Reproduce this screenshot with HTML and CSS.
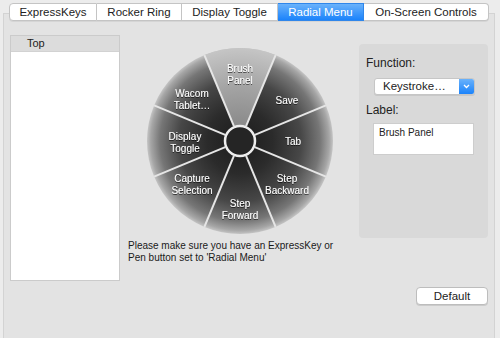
FILE: index.html
```html
<!DOCTYPE html>
<html>
<head>
    <meta charset="utf-8">
    <title>Radial Menu</title>
    <link rel="stylesheet" href="styles.css">
</head>
<body>
    <div class="tabs">
        <div class="tab first w-keys">ExpressKeys</div>
        <div class="tab w-ring">Rocker Ring</div>
        <div class="tab w-toggle">Display Toggle</div>
        <div class="tab active w-radial">Radial Menu</div>
        <div class="tab last w-osc">On-Screen Controls</div>
    </div>

    <div class="box">
        <!-- menu tree -->
        <div class="list">
            <div class="list-head">Top</div>
            <div class="list-body"></div>
        </div>

        <!-- wheel preview -->
        <div class="center">
            <svg class="wheel" width="190" height="190" viewBox="-95 -95 190 190">
                <defs>
                    <radialGradient id="wheelFill" cx="0" cy="0" r="94" gradientUnits="userSpaceOnUse">
                        <stop offset="0" stop-color="#1c1c1c"/>
                        <stop offset="0.35" stop-color="#2b2b2b"/>
                        <stop offset="0.65" stop-color="#474747"/>
                        <stop offset="0.85" stop-color="#767676"/>
                        <stop offset="0.95" stop-color="#a6a6a6"/>
                        <stop offset="1" stop-color="#cdcdcd"/>
                    </radialGradient>
                    <radialGradient id="hiFill" cx="0" cy="0" r="94" gradientUnits="userSpaceOnUse">
                        <stop offset="0.2" stop-color="#8c8c8c"/>
                        <stop offset="0.6" stop-color="#a5a5a5"/>
                        <stop offset="1" stop-color="#c6c6c6"/>
                    </radialGradient>
                    <filter id="shadow" x="-20%" y="-20%" width="140%" height="140%">
                        <feDropShadow dx="0" dy="0.8" stdDeviation="0.6" flood-color="#000" flood-opacity="0.8"/>
                    </filter>
                </defs>
                <circle r="93" fill="url(#wheelFill)"/>
                <path d="M0,0 L-35.6,-85.9 A93,93 0 0,1 35.6,-85.9 Z" fill="url(#hiFill)"/>
                <g stroke="#e6e6e6" stroke-width="2">
                    <line x1="-6.1" y1="-14.8" x2="-35.6" y2="-85.9"/>
                    <line x1="6.1" y1="-14.8" x2="35.6" y2="-85.9"/>
                    <line x1="14.8" y1="-6.1" x2="85.9" y2="-35.6"/>
                    <line x1="14.8" y1="6.1" x2="85.9" y2="35.6"/>
                    <line x1="6.1" y1="14.8" x2="35.6" y2="85.9"/>
                    <line x1="-6.1" y1="14.8" x2="-35.6" y2="85.9"/>
                    <line x1="-14.8" y1="6.1" x2="-85.9" y2="35.6"/>
                    <line x1="-14.8" y1="-6.1" x2="-85.9" y2="-35.6"/>
                </g>
                <circle r="15" fill="#252525" stroke="#eeeeee" stroke-width="2.5"/>
                <g class="labels" filter="url(#shadow)">
                    <text x="0" y="-69">Brush</text>
                    <text x="0" y="-57">Panel</text>
                    <text x="47" y="-37.5">Save</text>
                    <text x="53" y="3.5">Tab</text>
                    <text x="47" y="40.5">Step</text>
                    <text x="47" y="52.5">Backward</text>
                    <text x="0" y="65.5">Step</text>
                    <text x="0" y="77.5">Forward</text>
                    <text x="-48" y="40.5">Capture</text>
                    <text x="-48" y="52.5">Selection</text>
                    <text x="-55" y="-1">Display</text>
                    <text x="-55" y="10.5">Toggle</text>
                    <text x="-48" y="-44">Wacom</text>
                    <text x="-48" y="-32">Tablet…</text>
                </g>
            </svg>
            <p class="note">Please make sure you have an ExpressKey or<br>Pen button set to 'Radial Menu'</p>
        </div>

        <!-- settings for selected item -->
        <div class="side">
            <div class="panel">
                <div class="field-label">Function:</div>
                <div class="select">
                    <span class="select-text">Keystroke…</span>
                    <span class="select-arrow">
                        <svg width="7" height="5" viewBox="0 0 7 5"><path d="M1 1 L3.5 3.5 L6 1" fill="none" stroke="#fff" stroke-width="1.3"/></svg>
                    </span>
                </div>
                <div class="field-label label-gap">Label:</div>
                <div class="textbox">Brush Panel</div>
            </div>
            <button class="default-btn">Default</button>
        </div>
    </div>
</body>
</html>
```
FILE: styles.css
```css
* {
    box-sizing: border-box;
}
body {
    margin: 0;
    width: 500px;
    height: 338px;
    overflow: hidden;
    background: #ececec;
    font-family: "Liberation Sans", Arial, sans-serif;
    color: #222;
}

/* tab strip */
.tabs {
    display: flex;
    margin: 3px 0 0 9px;
    position: relative;
    z-index: 1;
}
.tab {
    height: 18px;
    line-height: 16px;
    text-align: center;
    font-size: 11.5px;
    background: #fff;
    border: 1px solid #c4c4c4;
    border-left: none;
    box-shadow: 0 1px 0 rgba(0, 0, 0, 0.06);
}
.tab.first {
    border-left: 1px solid #c4c4c4;
    border-radius: 4px 0 0 4px;
}
.tab.last {
    border-radius: 0 4px 4px 0;
}
.tab.active {
    color: #fff;
    background: linear-gradient(#6ab2fb, #1b83fb);
    border-color: #2f86ea;
}
.w-keys { width: 88px; }
.w-ring { width: 85px; }
.w-toggle { width: 96px; }
.w-radial { width: 86px; }
.w-osc { width: 125px; }

/* main box */
.box {
    display: flex;
    margin: -8px 5px 0 3px;
    height: 340px;
    padding: 21px 0 0 6px;
    background: #e3e3e3;
    border: 1px solid #d3d3d3;
    border-bottom: none;
}

.list {
    width: 110px;
    height: 246px;
    border: 1px solid #cbcbcb;
    background: #fff;
    flex-shrink: 0;
}
.list-head {
    height: 16px;
    line-height: 15px;
    padding-left: 16px;
    font-size: 11px;
    background: #dcdcdc;
    border-bottom: 1px solid #d2d2d2;
}

.center {
    width: 239px;
    padding-left: 8px;
    flex-shrink: 0;
}
.wheel {
    display: block;
    margin: 11px 0 0 17px;
}
.labels text {
    fill: #fff;
    font-family: "Liberation Sans", Arial, sans-serif;
    font-size: 10px;
    text-anchor: middle;
}
.note {
    margin: 4px 0 0;
    font-size: 10px;
    line-height: 12px;
    color: #1a1a1a;
}

.side {
    width: 129px;
    margin-top: 9px;
    display: flex;
    flex-direction: column;
}
.panel {
    height: 194px;
    padding: 12px 0 0 7px;
    background: #d9d9d9;
    border-radius: 4px;
}
.field-label {
    font-size: 12px;
    line-height: 14px;
}
.label-gap {
    margin-top: 8px;
}
.select {
    display: flex;
    width: 101px;
    height: 17px;
    margin: 8px 0 0 8px;
    background: #fff;
    border: 1px solid #c6c6c6;
    border-radius: 3px;
    overflow: hidden;
    box-shadow: 0 1px 0 rgba(0, 0, 0, 0.08);
}
.select-text {
    flex: 1;
    font-size: 11.5px;
    line-height: 15px;
    padding-left: 8px;
}
.select-arrow {
    width: 15px;
    display: flex;
    align-items: center;
    justify-content: center;
    background: linear-gradient(#6ab2fb, #1b83fb);
}
.textbox {
    width: 101px;
    height: 32px;
    margin: 6px 0 0 7px;
    padding: 3px 5px;
    font-size: 10px;
    background: #fff;
    border: 1px solid #cdcdcd;
}
.default-btn {
    align-self: flex-end;
    width: 72px;
    height: 18px;
    margin-top: 49px;
    padding: 0;
    font-family: "Liberation Sans", Arial, sans-serif;
    font-size: 11.5px;
    color: #222;
    background: #fff;
    border: 1px solid #bdbdbd;
    border-radius: 4px;
    box-shadow: 0 1px 0 rgba(0, 0, 0, 0.1);
}
```
